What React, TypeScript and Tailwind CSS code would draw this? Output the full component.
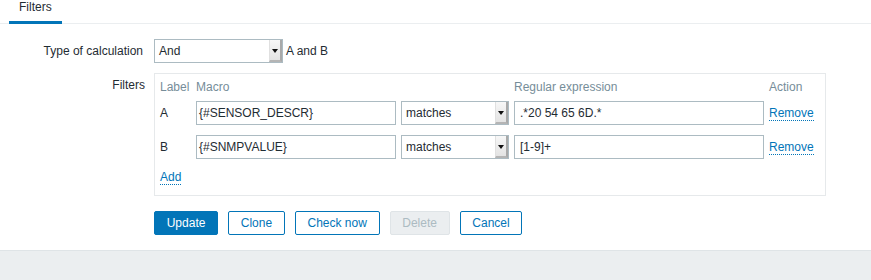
import React from "react";

function Select({ value, w }: { value: string; w: string }) {
  return (
    <div className={`relative h-[24px] ${w} border border-[#acbbc2] bg-white flex items-center pl-[4px] shrink-0`}>
      <span className="leading-[14px]">{value}</span>
      <div className="absolute right-0 top-0 bottom-0 w-[13px] bg-gradient-to-b from-[#f7f7f7] to-[#e3e3e3] border-r-[2px] border-b-[2px] border-r-[#a9a9a9] border-b-[#b5b5b5] border-l border-l-[#e0e0e0] flex items-center justify-center">
        <svg width="6" height="4" viewBox="0 0 6 4" className="mt-[1px]">
          <polygon points="0,0 6,0 3,4" fill="#111" />
        </svg>
      </div>
    </div>
  );
}

function Input({ value, w, pl }: { value: string; w: string; pl: string }) {
  return (
    <div className={`h-[24px] ${w} border border-[#acbbc2] bg-white flex items-center ${pl} shrink-0`}>
      <span className="leading-[14px] whitespace-nowrap">{value}</span>
    </div>
  );
}

function Link({ children }: { children: React.ReactNode }) {
  return (
    <span className="text-[#0275b8] leading-[13px] border-b border-dotted border-[#0275b8]">{children}</span>
  );
}

export default function App() {
  const rows = [
    { label: "A", macro: "{#SENSOR_DESCR}", regex: ".*20 54 65 6D.*" },
    { label: "B", macro: "{#SNMPVALUE}", regex: "[1-9]+" },
  ];
  return (
    <div
      className="min-h-screen flex flex-col bg-white text-[12px] text-[#1f2c33]"
      style={{ fontFamily: '"Liberation Sans", Arial, sans-serif' }}
    >
      <div className="h-[24px] border-b border-[#ebeef0] flex pl-[9px]">
        <div className="h-[24px] -mb-[1px] px-[10px] border-b-[3px] border-[#0275b8] leading-[14px]">
          Filters
        </div>
      </div>

      <div className="pt-[15px] pb-[15px]">
        <div className="flex items-center h-[24px]">
          <div className="w-[145px] text-right pr-[2px]">Type of calculation</div>
          <div className="ml-[9px] flex items-center">
            <Select value="And" w="w-[129px]" />
            <span className="ml-[3px]">A and B</span>
          </div>
        </div>

        <div className="flex mt-[10px]">
          <div className="w-[145px] text-right pt-[5px] leading-[14px]">Filters</div>
          <div className="ml-[9px] w-[672px] border border-[#e6e9eb] pl-[5px] pt-[4px] pb-[10px]">
            <div className="flex h-[18px] items-center text-[#768d99] gap-x-[5px]">
              <div className="w-[31px]">Label</div>
              <div className="w-[200px]">Macro</div>
              <div className="w-[108px]"></div>
              <div className="w-[250px]">Regular expression</div>
              <div>Action</div>
            </div>
            {rows.map((r, i) => (
              <div key={r.label} className={`flex items-center h-[24px] gap-x-[5px] ${i === 0 ? "mt-[5px]" : "mt-[10px]"}`}>
                <div className="w-[31px]">{r.label}</div>
                <Input value={r.macro} w="w-[200px]" pl="pl-[2px]" />
                <Select value="matches" w="w-[108px]" />
                <Input value={r.regex} w="w-[250px]" pl="pl-[5px]" />
                <div>
                  <Link>Remove</Link>
                </div>
              </div>
            ))}
            <div className="mt-[12px] h-[14px] flex items-center">
              <Link>Add</Link>
            </div>
          </div>
        </div>

        <div className="flex ml-[154px] mt-[15px] gap-[10px]">
          <button className="h-[24px] px-[11.7px] rounded-[2px] bg-[#0275b8] border border-[#0275b8] text-white">Update</button>
          <button className="h-[24px] px-[11.7px] rounded-[2px] bg-white border border-[#0275b8] text-[#0275b8]">Clone</button>
          <button className="h-[24px] px-[11.7px] rounded-[2px] bg-white border border-[#0275b8] text-[#0275b8]">Check now</button>
          <button className="h-[24px] px-[11.7px] rounded-[2px] bg-[#ebeef0] border border-[#dfe4e7] text-[#acbbc2]">Delete</button>
          <button className="h-[24px] px-[11.7px] rounded-[2px] bg-white border border-[#0275b8] text-[#0275b8]">Cancel</button>
        </div>
      </div>

      <div className="flex-1 bg-[#ebeef0] border-t border-[#dfe4e7]"></div>
    </div>
  );
}
